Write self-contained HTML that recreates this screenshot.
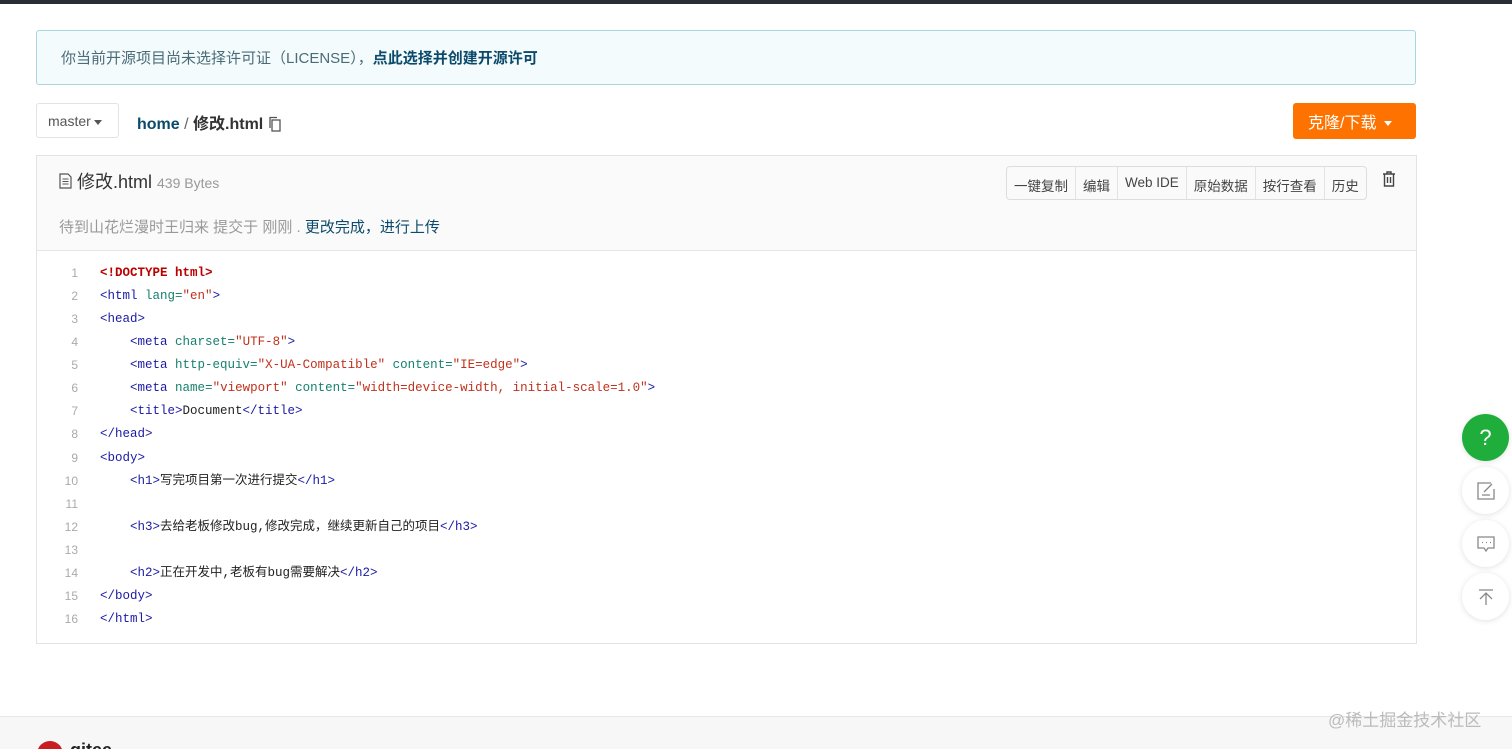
<!DOCTYPE html>
<html><head><meta charset="utf-8">
<style>
*{box-sizing:border-box;margin:0;padding:0}
body{width:1512px;height:749px;overflow:hidden;background:#fff;font-family:"Liberation Sans","Noto Sans CJK SC",sans-serif;position:relative;color:#333}
.topbar{position:absolute;left:0;top:0;width:1512px;height:4px;background:#2b2d36}
.notice{position:absolute;left:36px;top:30px;width:1380px;height:55px;border:1px solid #a9d5de;background:#f4fbfd;border-radius:3px;font-size:15px;color:#4a6b78;padding:16px 0 0 24px}
.notice b{color:#0b4a6a}
.branch{position:absolute;left:36px;top:103px;width:83px;height:35px;border:1px solid #e3e3e3;border-radius:3px;font-size:14px;color:#555;padding:9px 0 0 11px}
.tri{display:inline-block;border-left:4px solid transparent;border-right:4px solid transparent;border-top:5px solid #555;vertical-align:middle;margin-left:3px}
.crumb{position:absolute;left:137px;top:110px;font-size:16px;font-weight:bold;color:#333}
.crumb .h{color:#0b4a6a}
.crumb .s{color:#666;font-weight:normal}
.clone{position:absolute;left:1293px;top:103px;width:123px;height:36px;background:#fe7300;border-radius:3px;color:#fff;font-size:16px;padding:6px 0 0 15px}
.clone .tri{border-top-color:#fff;margin-left:8px}
.box{position:absolute;left:36px;top:155px;width:1381px;height:489px;border:1px solid #e3e3e3}
.head{height:95px;background:#fafafa;border-bottom:1px solid #e6e6e6;position:relative}
.fname{position:absolute;left:22px;top:12px;font-size:18px;color:#333}
.fname small{font-size:14px;color:#999}
.commit{position:absolute;left:22px;top:60px;font-size:15px;color:#999}
.commit a{color:#0b4a6a}
.btns{position:absolute;left:969px;top:10px;height:34px;border:1px solid #ddd;border-radius:4px;background:#fafafa;display:flex;font-size:13.5px;color:#444}
.btns span{padding:8px 7px 0;border-right:1px solid #e3e3e3}
.btns span:last-child{border-right:0}
.trash{position:absolute;left:1345px;top:15px}
.code{padding-top:11px;font-family:"Liberation Mono","Noto Sans CJK SC",monospace;font-size:12.5px}
.ln{height:23.07px;line-height:23.07px;white-space:pre;display:flex}
.n{width:41px;text-align:right;color:#aaa;font-family:"Liberation Sans",sans-serif;font-size:12px}
.c{padding-left:22px;color:#222}
.t{color:#1a1aa6}.a{color:#16806f}.v{color:#c0311c}.d{color:#b00;font-weight:bold}
.footer{position:absolute;left:0;top:716px;width:1512px;height:33px;background:#f7f7f7;border-top:1px solid #e8e8e8;overflow:hidden}
.wm{position:absolute;left:1328px;top:706px;font-size:17px;color:#bbb}
.fb{position:absolute;left:1462px;width:47px;height:47px;border-radius:50%;background:#fff;box-shadow:0 1px 6px rgba(0,0,0,.12);display:flex;align-items:center;justify-content:center}
</style></head><body>
<div class="topbar"></div>
<div class="notice">你当前开源项目尚未选择许可证（LICENSE），<b>点此选择并创建开源许可</b></div>
<div class="branch">master<span class="tri"></span></div>
<div class="crumb"><span class="h">home</span><span class="s"> / </span> 修改.html <svg width="14" height="16" viewBox="0 0 14 16" style="vertical-align:-3px"><rect x="4" y="4" width="8" height="11" fill="none" stroke="#555" stroke-width="1.3"/><path d="M2 12V1.5h7" fill="none" stroke="#555" stroke-width="1.3"/></svg></div>
<div class="clone">克隆/下载<span class="tri"></span></div>
<div class="box">
 <div class="head">
  <div class="fname"><svg width="13" height="16" viewBox="0 0 13 16" style="vertical-align:-1px"><path d="M1 1h8l3 3v11H1z" fill="none" stroke="#555" stroke-width="1.2"/><path d="M3.5 6h6M3.5 8.5h6M3.5 11h6" stroke="#555"/></svg> 修改.html <small>439 Bytes</small></div>
  <div class="btns"><span>一键复制</span><span>编辑</span><span>Web IDE</span><span>原始数据</span><span>按行查看</span><span>历史</span></div>
  <svg class="trash" width="14" height="16" viewBox="0 0 14 16"><path d="M1 3h12M5 3V1h4v2M2.5 3v12h9V3M5.5 6v6M8.5 6v6" fill="none" stroke="#444" stroke-width="1.4"/></svg>
  <div class="commit">待到山花烂漫时王归来 提交于 刚刚 . <a>更改完成，进行上传</a></div>
 </div>
 <div class="code">
<div class="ln"><span class="n">1</span><span class="c d">&lt;!DOCTYPE html&gt;</span></div>
<div class="ln"><span class="n">2</span><span class="c"><span class="t">&lt;html</span> <span class="a">lang=</span><span class="v">"en"</span><span class="t">&gt;</span></span></div>
<div class="ln"><span class="n">3</span><span class="c t">&lt;head&gt;</span></div>
<div class="ln"><span class="n">4</span><span class="c">    <span class="t">&lt;meta</span> <span class="a">charset=</span><span class="v">"UTF-8"</span><span class="t">&gt;</span></span></div>
<div class="ln"><span class="n">5</span><span class="c">    <span class="t">&lt;meta</span> <span class="a">http-equiv=</span><span class="v">"X-UA-Compatible"</span> <span class="a">content=</span><span class="v">"IE=edge"</span><span class="t">&gt;</span></span></div>
<div class="ln"><span class="n">6</span><span class="c">    <span class="t">&lt;meta</span> <span class="a">name=</span><span class="v">"viewport"</span> <span class="a">content=</span><span class="v">"width=device-width, initial-scale=1.0"</span><span class="t">&gt;</span></span></div>
<div class="ln"><span class="n">7</span><span class="c">    <span class="t">&lt;title&gt;</span>Document<span class="t">&lt;/title&gt;</span></span></div>
<div class="ln"><span class="n">8</span><span class="c t">&lt;/head&gt;</span></div>
<div class="ln"><span class="n">9</span><span class="c t">&lt;body&gt;</span></div>
<div class="ln"><span class="n">10</span><span class="c">    <span class="t">&lt;h1&gt;</span>写完项目第一次进行提交<span class="t">&lt;/h1&gt;</span></span></div>
<div class="ln"><span class="n">11</span><span class="c"></span></div>
<div class="ln"><span class="n">12</span><span class="c">    <span class="t">&lt;h3&gt;</span>去给老板修改bug,修改完成，继续更新自己的项目<span class="t">&lt;/h3&gt;</span></span></div>
<div class="ln"><span class="n">13</span><span class="c"></span></div>
<div class="ln"><span class="n">14</span><span class="c">    <span class="t">&lt;h2&gt;</span>正在开发中,老板有bug需要解决<span class="t">&lt;/h2&gt;</span></span></div>
<div class="ln"><span class="n">15</span><span class="c t">&lt;/body&gt;</span></div>
<div class="ln"><span class="n">16</span><span class="c t">&lt;/html&gt;</span></div>
 </div>
</div>
<div class="fb" style="top:414px;background:#1fae3c;color:#fff;font-size:22px">?</div>
<div class="fb" style="top:467px"><svg width="20" height="20" viewBox="0 0 20 20" fill="none" stroke="#888" stroke-width="1.3"><path d="M15 2H2v16h16V8M6 14h8M8 11l8-8"/></svg></div>
<div class="fb" style="top:520px"><svg width="20" height="20" viewBox="0 0 20 20" fill="none" stroke="#888" stroke-width="1.3"><path d="M2 3h16v11h-6l-2 3-2-3H2z"/><path d="M6 8.5h1M10 8.5h1M14 8.5h1"/></svg></div>
<div class="fb" style="top:573px"><svg width="20" height="20" viewBox="0 0 20 20" fill="none" stroke="#888" stroke-width="1.3"><path d="M3 3h14M10 18V6M4 12l6-6 6 6"/></svg></div>
<div class="footer"><svg style="position:absolute;left:36px;top:23px" width="28" height="12"><circle cx="14" cy="14" r="13" fill="#c71d23"/></svg><span style="position:absolute;left:70px;top:23px;font-weight:bold;font-size:18px;color:#222">gitee</span></div>
<div class="wm">@稀土掘金技术社区</div>
</body></html>
